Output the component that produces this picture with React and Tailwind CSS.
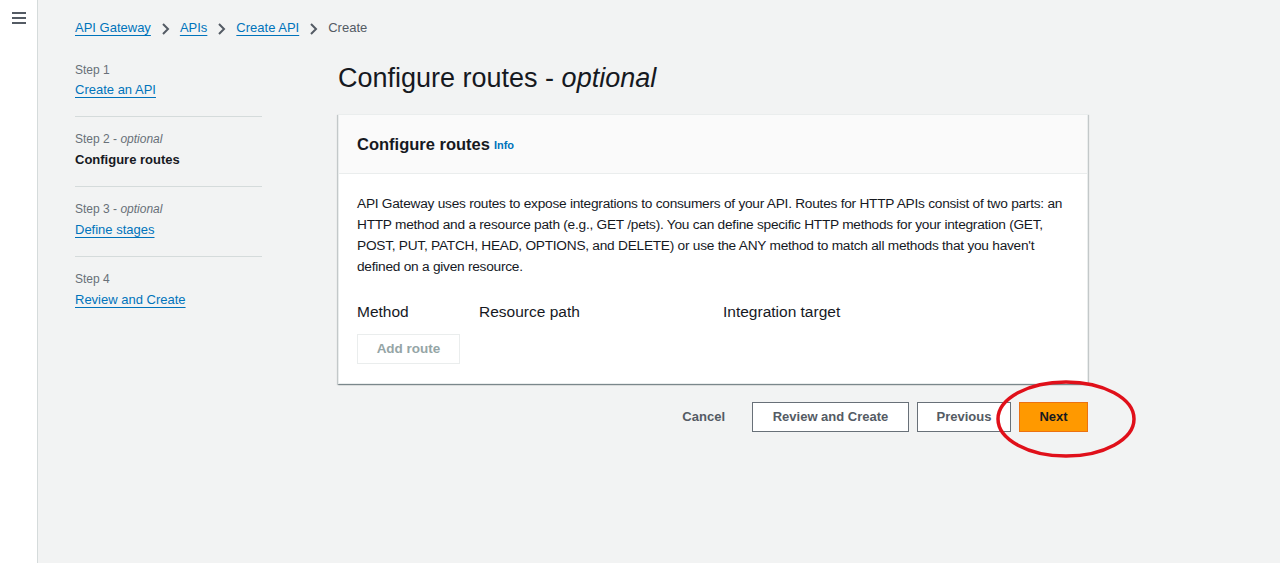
import React from "react";

export default function App() {
  const font = { fontFamily: '"Liberation Sans", Arial, sans-serif' };
  return (
    <div className="flex w-[1280px] h-[563px] bg-[#f2f3f3] text-[#16191f] overflow-hidden" style={font}>
      <div className="w-[38px] shrink-0 bg-white border-r border-[#d5dbdb] flex justify-center pt-[12px]">
        <svg width="14" height="12" viewBox="0 0 14 12">
          <path d="M0 1h14M0 6h14M0 11h14" stroke="#545b64" strokeWidth="2" />
        </svg>
      </div>
      <div className="flex-1 pl-[37px] pt-[19px]">
        <nav className="flex items-center text-[13px] h-[18px]">
          <span className="text-[#0073bb] underline underline-offset-[3px] decoration-[#0073bb]">API Gateway</span>
          <span className="mx-[10px] text-[#687078]"><Chev /></span>
          <span className="text-[#0073bb] underline underline-offset-[3px]">APIs</span>
          <span className="mx-[10px] text-[#687078]"><Chev /></span>
          <span className="text-[#0073bb] underline underline-offset-[3px]">Create API</span>
          <span className="mx-[10px] text-[#687078]"><Chev /></span>
          <span className="text-[#545b64]">Create</span>
        </nav>
        <div className="flex mt-[22px]">
          <div className="w-[187px] shrink-0 pt-[3px]">
            <Step label="Step 1" />
            <div className="text-[13px] text-[#0073bb] underline underline-offset-[3px] mt-[3px] leading-[18px]">Create an API</div>
            <div className="border-t border-[#d5dbdb] mt-[17px] pt-[14px]">
              <Step label="Step 2" opt />
              <div className="text-[13px] font-bold mt-[4px] leading-[18px]">Configure routes</div>
            </div>
            <div className="border-t border-[#d5dbdb] mt-[17px] pt-[14px]">
              <Step label="Step 3" opt />
              <div className="text-[13px] text-[#0073bb] underline underline-offset-[3px] mt-[4px] leading-[18px]">Define stages</div>
            </div>
            <div className="border-t border-[#d5dbdb] mt-[17px] pt-[14px]">
              <Step label="Step 4" />
              <div className="text-[13px] text-[#0073bb] underline underline-offset-[3px] mt-[4px] leading-[18px]">Review and Create</div>
            </div>
          </div>
          <div className="ml-[76px] w-[750px] relative">
            <h1 className="text-[27px] leading-[34px] font-normal mt-[2px]">
              Configure routes - <i>optional</i>
            </h1>
            <div className="mt-[19px] bg-white border border-[#eaeded] shadow-[0_1px_1px_0_rgba(0,28,36,0.3),1px_1px_1px_0_rgba(0,28,36,0.15),-1px_1px_1px_0_rgba(0,28,36,0.15)]">
              <div className="bg-[#fafafa] border-b border-[#eaeded] h-[59px] flex items-center px-[18px]">
                <span className="text-[16.5px] font-bold">Configure routes</span>
                <span className="text-[11px] font-bold text-[#0073bb] ml-[4px] mt-[3px]">Info</span>
              </div>
              <div className="px-[18px] pt-[19px] pb-[19px]">
                <p className="text-[13.7px] leading-[21px] tracking-[-0.25px] text-[#16191f]">
                  API Gateway uses routes to expose integrations to consumers of your API. Routes for HTTP APIs consist of two parts: an HTTP method and a resource path (e.g., GET /pets). You can define specific HTTP methods for your integration (GET, POST, PUT, PATCH, HEAD, OPTIONS, and DELETE) or use the ANY method to match all methods that you haven't defined on a given resource.
                </p>
                <div className="flex text-[15.5px] mt-[25px] leading-[20px]">
                  <span className="w-[122px]">Method</span>
                  <span className="w-[244px]">Resource path</span>
                  <span>Integration target</span>
                </div>
                <div className="mt-[12px] w-[103px] h-[30px] border border-[#eaeded] flex items-center justify-center text-[13.5px] font-bold text-[#95a5a6]">
                  Add route
                </div>
              </div>
            </div>
            <div className="flex justify-end items-center mt-[18px]">
              <span className="text-[13px] font-bold text-[#545b64] mr-[27px]">Cancel</span>
              <span className="h-[30px] w-[157px] border border-[#687078] bg-white flex items-center justify-center text-[13px] font-bold text-[#545b64]">Review and Create</span>
              <span className="ml-[8px] h-[30px] w-[94px] border border-[#687078] bg-white flex items-center justify-center text-[13px] font-bold text-[#545b64]">Previous</span>
              <span className="ml-[8px] h-[30px] w-[69px] bg-[#ff9900] border border-[#ec7211] flex items-center justify-center text-[13px] font-bold text-[#16191f]">Next</span>
            </div>
            <svg className="absolute left-[656px] top-[319px]" width="144" height="82" viewBox="0 0 144 82">
              <ellipse cx="72" cy="41" rx="68" ry="37" fill="none" stroke="#e0101a" strokeWidth="3.5" />
            </svg>
          </div>
        </div>
      </div>
    </div>
  );
}

function Chev() {
  return (
    <svg width="9" height="12" viewBox="0 0 9 12" className="inline-block">
      <path d="M2 1l5 5-5 5" fill="none" stroke="#545b64" strokeWidth="2" />
    </svg>
  );
}

function Step({ label, opt }) {
  return (
    <div className="text-[12px] text-[#687078] leading-[16px]">
      {label}
      {opt && <> - <i>optional</i></>}
    </div>
  );
}
